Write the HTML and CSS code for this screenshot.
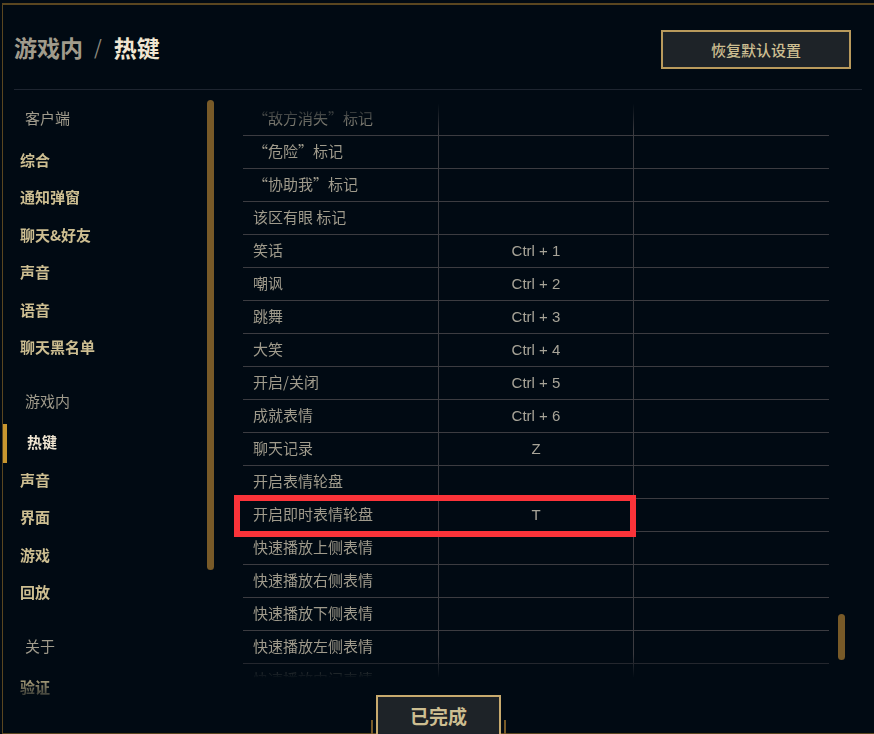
FILE: index.html
```html
<!DOCTYPE html>
<html lang="zh-CN">
<head>
<meta charset="utf-8">
<title>热键</title>
<link rel="stylesheet" href="styles.css">
</head>
<body>
<div class="window">
  <header class="header">
    <h1 class="title"><span class="crumb">游戏内</span><span class="sep">/</span><span class="current">热键</span></h1>
    <button class="btn-reset">恢复默认设置</button>
  </header>
  <div class="body">
    <aside class="sidebar">
      <nav class="nav">
        <div class="group first">
          <div class="group-label">客户端</div>
          <a class="item">综合</a>
          <a class="item">通知弹窗</a>
          <a class="item">聊天&amp;好友</a>
          <a class="item">声音</a>
          <a class="item">语音</a>
          <a class="item">聊天黑名单</a>
        </div>
        <div class="group">
          <div class="group-label">游戏内</div>
          <a class="item active">热键</a>
          <a class="item">声音</a>
          <a class="item">界面</a>
          <a class="item">游戏</a>
          <a class="item">回放</a>
        </div>
        <div class="group">
          <div class="group-label">关于</div>
          <a class="item">验证</a>
        </div>
      </nav>
      <div class="side-track"><div class="side-thumb"></div></div>
    </aside>
    <main class="content">
      <div class="table">
        <div class="row"><div class="cell name">“敌方消失”标记</div><div class="cell key"></div><div class="cell alt"></div></div>
        <div class="row"><div class="cell name">“危险”标记</div><div class="cell key"></div><div class="cell alt"></div></div>
        <div class="row"><div class="cell name">“协助我”标记</div><div class="cell key"></div><div class="cell alt"></div></div>
        <div class="row"><div class="cell name">该区有眼 标记</div><div class="cell key"></div><div class="cell alt"></div></div>
        <div class="row"><div class="cell name">笑话</div><div class="cell key">Ctrl + 1</div><div class="cell alt"></div></div>
        <div class="row"><div class="cell name">嘲讽</div><div class="cell key">Ctrl + 2</div><div class="cell alt"></div></div>
        <div class="row"><div class="cell name">跳舞</div><div class="cell key">Ctrl + 3</div><div class="cell alt"></div></div>
        <div class="row"><div class="cell name">大笑</div><div class="cell key">Ctrl + 4</div><div class="cell alt"></div></div>
        <div class="row"><div class="cell name">开启/关闭</div><div class="cell key">Ctrl + 5</div><div class="cell alt"></div></div>
        <div class="row"><div class="cell name">成就表情</div><div class="cell key">Ctrl + 6</div><div class="cell alt"></div></div>
        <div class="row"><div class="cell name">聊天记录</div><div class="cell key">Z</div><div class="cell alt"></div></div>
        <div class="row"><div class="cell name">开启表情轮盘</div><div class="cell key"></div><div class="cell alt"></div></div>
        <div class="row"><div class="cell name">开启即时表情轮盘</div><div class="cell key">T</div><div class="cell alt"></div></div>
        <div class="row"><div class="cell name">快速播放上侧表情</div><div class="cell key"></div><div class="cell alt"></div></div>
        <div class="row"><div class="cell name">快速播放右侧表情</div><div class="cell key"></div><div class="cell alt"></div></div>
        <div class="row"><div class="cell name">快速播放下侧表情</div><div class="cell key"></div><div class="cell alt"></div></div>
        <div class="row"><div class="cell name">快速播放左侧表情</div><div class="cell key"></div><div class="cell alt"></div></div>
        <div class="row"><div class="cell name">快速播放中间表情</div><div class="cell key"></div><div class="cell alt"></div></div>
      </div>
      <div class="track"><div class="thumb"></div></div>
    </main>
  </div>
  <footer class="footer">
    <button class="btn-done">已完成</button>
  </footer>
</div>
<div class="highlight"></div>
</body>
</html>
```
FILE: styles.css
```css
* {
  box-sizing: border-box;
  margin: 0;
  padding: 0;
}

html, body {
  width: 874px;
  height: 734px;
  overflow: hidden;
}

body {
  position: relative;
  background: #010a13;
  font-family: "Noto Sans CJK SC", "Liberation Sans", sans-serif;
  color: #a09b8c;
}

.window {
  margin: 3px 0 0 2px;
  height: 731px;
  border-top: 2px solid #5a4620;
  border-left: 1px solid #5a4620;
  border-bottom: 1px solid #5a4620;
  display: flex;
  flex-direction: column;
}

/* header */
.header {
  height: 85px;
  margin: 0 12px 0 11px;
  padding-right: 11px;
  border-bottom: 1px solid #1e2530;
  display: flex;
  justify-content: space-between;
  align-items: flex-start;
  flex-shrink: 0;
}

.title {
  margin-top: 27px;
  font-size: 23px;
  line-height: 30px;
  font-weight: 700;
  display: flex;
  align-items: center;
}

.crumb {
  color: #a09b8c;
}

.sep {
  margin: 0 12px 0 11px;
  font-weight: 400;
  font-size: 20px;
  color: #8c897f;
}

.current {
  color: #f0e6d2;
}

.btn-reset {
  margin-top: 25px;
  width: 190px;
  height: 39px;
  background: #1e2328;
  border: 2px solid #b99a5c;
  color: #cdbe91;
  font-family: "Noto Sans CJK SC", sans-serif;
  font-size: 15px;
  font-weight: 500;
}

/* body */
.body {
  flex: 1;
  display: flex;
  min-height: 0;
}

.sidebar {
  width: 240px;
  display: flex;
  flex-shrink: 0;
}

.nav {
  width: 204px;
  overflow: hidden;
  -webkit-mask-image: linear-gradient(to bottom, #000 585px, rgba(0, 0, 0, 0.3) 605px);
  mask-image: linear-gradient(to bottom, #000 585px, rgba(0, 0, 0, 0.3) 605px);
}

.group {
  margin-top: 20px;
}

.group.first {
  margin-top: 13px;
}

.group-label {
  line-height: 30px;
  padding-left: 22px;
  margin-bottom: 7.5px;
  font-size: 15px;
  color: #a09b8c;
}

.item {
  display: block;
  position: relative;
  line-height: 37.5px;
  height: 37.5px;
  padding-left: 17px;
  font-size: 15px;
  font-weight: 700;
  color: #cdbe91;
}

.item.active {
  padding-left: 24px;
  color: #f0e6d2;
}

.item.active::before {
  content: "";
  position: absolute;
  left: 0;
  top: 1px;
  width: 4px;
  height: 39px;
  background: #c8962f;
}

.side-track {
  width: 7px;
}

.side-thumb {
  margin-top: 10px;
  height: 470px;
  border-radius: 4px;
  background: #785a28;
}

/* table */
.content {
  display: flex;
  padding-top: 13px;
  gap: 9px;
}

.table {
  width: 586px;
  height: 579px;
  overflow: hidden;
  -webkit-mask-image: linear-gradient(to bottom, transparent 0, #000 28px, #000 551px, transparent 575px);
  mask-image: linear-gradient(to bottom, transparent 0, #000 28px, #000 551px, transparent 575px);
}

.row {
  display: grid;
  grid-template-columns: 196px 195px 195px;
  height: 33px;
  border-bottom: 1px solid #3c3c41;
}

.cell {
  line-height: 30px;
  padding-bottom: 2px;
  font-size: 15px;
  color: #a09b8c;
  white-space: nowrap;
}

.cell.name {
  padding-left: 10px;
  border-right: 1px solid #3c3c41;
}

.cell.key {
  line-height: 32px;
  padding-bottom: 0;
  text-align: center;
  border-right: 1px solid #3c3c41;
  font-family: "Liberation Sans", "Noto Sans CJK SC", sans-serif;
  color: #a8a498;
}

.track {
  width: 7px;
}

.thumb {
  margin-top: 511px;
  height: 46px;
  border-radius: 4px;
  background: #785a28;
}

/* footer */
.footer {
  height: 38px;
  flex-shrink: 0;
  display: flex;
  justify-content: center;
}

.btn-done {
  position: relative;
  z-index: 1;
  width: 125px;
  height: 42px;
  background: #1e2328;
  border: 2px solid #c8aa6e;
  color: #cdbe91;
  font-family: "Noto Sans CJK SC", sans-serif;
  font-size: 19px;
  font-weight: 700;
  line-height: 36px;
}

.btn-done::before,
.btn-done::after {
  content: "";
  position: absolute;
  top: 23px;
  width: 2px;
  height: 16px;
  background: #785a28;
}

.btn-done::before {
  left: -7px;
}

.btn-done::after {
  right: -7px;
}

/* annotation overlay */
.highlight {
  position: absolute;
  left: 234px;
  top: 495px;
  width: 402px;
  height: 42px;
  border: 6px solid #fb3339;
  z-index: 2;
}
```
